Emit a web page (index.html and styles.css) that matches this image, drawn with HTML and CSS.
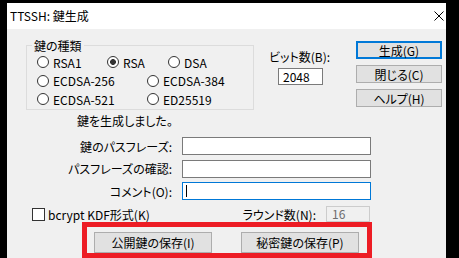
FILE: index.html
```html
<!DOCTYPE html>
<html lang="ja">
<head>
    <meta charset="UTF-8">
    <meta name="viewport" content="width=device-width, initial-scale=1.0">
    <title>TTSSH: 鍵生成</title>
    <link rel="stylesheet" href="styles.css">
</head>
<body>
    <div class="window">
        <!-- Title bar -->
        <div class="titlebar">
            <span class="title">TTSSH: 鍵生成</span>
            <svg class="close" width="10" height="10" viewBox="0 0 10 10">
                <path d="M0.5 0.5 L9.5 9.5 M9.5 0.5 L0.5 9.5" stroke="#000" stroke-width="1" fill="none"/>
            </svg>
        </div>

        <div class="content">
            <div class="top">
                <!-- Key type group -->
                <div class="group">
                    <span class="legend">鍵の種類</span>
                    <div class="radio-row">
                        <span class="radio-item w70"><span class="radio"></span>RSA1</span>
                        <span class="radio-item w61"><span class="radio checked"></span>RSA</span>
                        <span class="radio-item"><span class="radio"></span>DSA</span>
                    </div>
                    <div class="radio-row">
                        <span class="radio-item w110"><span class="radio"></span>ECDSA-256</span>
                        <span class="radio-item"><span class="radio"></span>ECDSA-384</span>
                    </div>
                    <div class="radio-row">
                        <span class="radio-item w110"><span class="radio"></span>ECDSA-521</span>
                        <span class="radio-item"><span class="radio"></span>ED25519</span>
                    </div>
                </div>

                <div class="bits">
                    <div class="bits-label">ビット数(B):</div>
                    <div class="edit bits-edit">2048</div>
                </div>

                <div class="side-buttons">
                    <div class="btn btn-default">生成(G)</div>
                    <div class="btn">閉じる(C)</div>
                    <div class="btn">ヘルプ(H)</div>
                </div>
            </div>

            <p class="status">鍵を生成しました。</p>

            <div class="form">
                <div class="form-row">
                    <span class="form-label">鍵のパスフレーズ:</span>
                    <div class="edit pass-edit"></div>
                </div>
                <div class="form-row">
                    <span class="form-label">パスフレーズの確認:</span>
                    <div class="edit pass-edit"></div>
                </div>
                <div class="form-row">
                    <span class="form-label">コメント(O):</span>
                    <div class="edit pass-edit focused"><span class="caret"></span></div>
                </div>
            </div>

            <div class="options">
                <span class="check-item"><span class="checkbox"></span>bcrypt KDF形式(K)</span>
                <span class="round-item">
                    <span class="round-label">ラウンド数(N):</span>
                    <span class="edit round-edit">16</span>
                </span>
            </div>

            <!-- Save buttons (highlighted) -->
            <div class="save-area">
                <div class="btn save-btn">公開鍵の保存(I)</div>
                <div class="btn save-btn">秘密鍵の保存(P)</div>
            </div>
        </div>
    </div>
</body>
</html>
```

FILE: styles.css
```css
/* Page */
body {
    margin: 0;
    background: #000;
    font-family: "Noto Sans CJK JP", "Noto Sans", sans-serif;
    font-size: 12px;
    font-feature-settings: "palt";
    color: #000;
    overflow: hidden;
}

/* Dialog window */
.window {
    margin: 3px 0 0 7px;
    width: 439px;
    height: 255px;
    background: #f0f0f0;
    overflow: hidden;
}

.titlebar {
    height: 26px;
    background: #fff;
    display: flex;
    align-items: center;
    padding-left: 3px;
}

.title {
    flex: 1;
    line-height: 14px;
}

.close {
    margin-right: 2px;
}

/* Top part: group, bit count, buttons */
.top {
    display: flex;
    align-items: flex-start;
    height: 81px;
}

.group {
    position: relative;
    margin: 16px 0 0 19px;
    width: 228px;
    height: 65px;
    box-sizing: border-box;
    border: 1px solid #dcdcdc;
    padding: 7px 0 0 10px;
}

.legend {
    position: absolute;
    top: -7px;
    left: 5px;
    padding: 0 2px;
    line-height: 14px;
    background: #f0f0f0;
}

.radio-row {
    display: flex;
    align-items: center;
    height: 18.5px;
}

.radio-item {
    display: flex;
    align-items: center;
}

.w70 { width: 70px; }
.w61 { width: 61px; }
.w110 { width: 110px; }

.radio {
    width: 12px;
    height: 12px;
    box-sizing: border-box;
    border: 1px solid #333;
    border-radius: 50%;
    background: #fff;
    margin-right: 4px;
}

.radio.checked {
    background: radial-gradient(circle, #333 0 2.6px, #fff 3.2px);
}

.bits {
    margin: 21px 0 0 15px;
    width: 87px;
}

.bits-label {
    line-height: 14px;
}

.edit {
    box-sizing: border-box;
    border: 1px solid #7a7a7a;
    background: #fff;
}

.bits-edit {
    margin: 4px 0 0 9px;
    width: 45px;
    height: 17px;
    padding-left: 4px;
    line-height: 15px;
}

.side-buttons {
    margin-top: 12px;
    display: flex;
    flex-direction: column;
    gap: 6px;
}

.btn {
    box-sizing: border-box;
    background: #e1e1e1;
    border: 1px solid #adadad;
    text-align: center;
    display: flex;
    align-items: center;
    justify-content: center;
}

.side-buttons .btn {
    width: 86px;
    height: 18px;
}

.btn-default {
    border: 2px solid #0078d7;
}

/* Status and passphrase fields */
.status {
    margin: 4px 0 0 70px;
    line-height: 14px;
}

.form {
    margin-top: 9px;
    display: flex;
    flex-direction: column;
    gap: 4.5px;
}

.form-row {
    display: flex;
    align-items: center;
}

.form-label {
    width: 165px;
    text-align: right;
    margin-right: 10px;
}

.pass-edit {
    width: 189px;
    height: 18px;
    display: flex;
    align-items: center;
}

.pass-edit.focused {
    border-color: #0078d7;
}

.caret {
    width: 1px;
    height: 12px;
    margin-left: 3px;
    background: #000;
}

/* Options row */
.options {
    margin-top: 6px;
    height: 16px;
    display: flex;
    align-items: center;
    justify-content: space-between;
    padding: 0 76px 0 25px;
}

.check-item {
    display: flex;
    align-items: center;
}

.checkbox {
    width: 13px;
    height: 13px;
    box-sizing: border-box;
    border: 1px solid #333;
    background: #fff;
    margin-right: 3px;
}

.round-item {
    display: flex;
    align-items: center;
}

.round-label {
    margin-right: 10px;
}

.round-edit {
    width: 44px;
    height: 16px;
    border-color: #cccccc;
    background: #f0f0f0;
    color: #6d6d6d;
    padding-left: 5px;
    line-height: 14px;
}

/* Highlighted save buttons */
.save-area {
    margin-left: 75px;
    width: 290px;
    height: 36px;
    box-sizing: border-box;
    border: 5px solid #ed1c24;
    padding: 5px 0 0 7px;
    display: flex;
    gap: 29px;
}

.save-btn {
    width: 118px;
    height: 21px;
}
```
